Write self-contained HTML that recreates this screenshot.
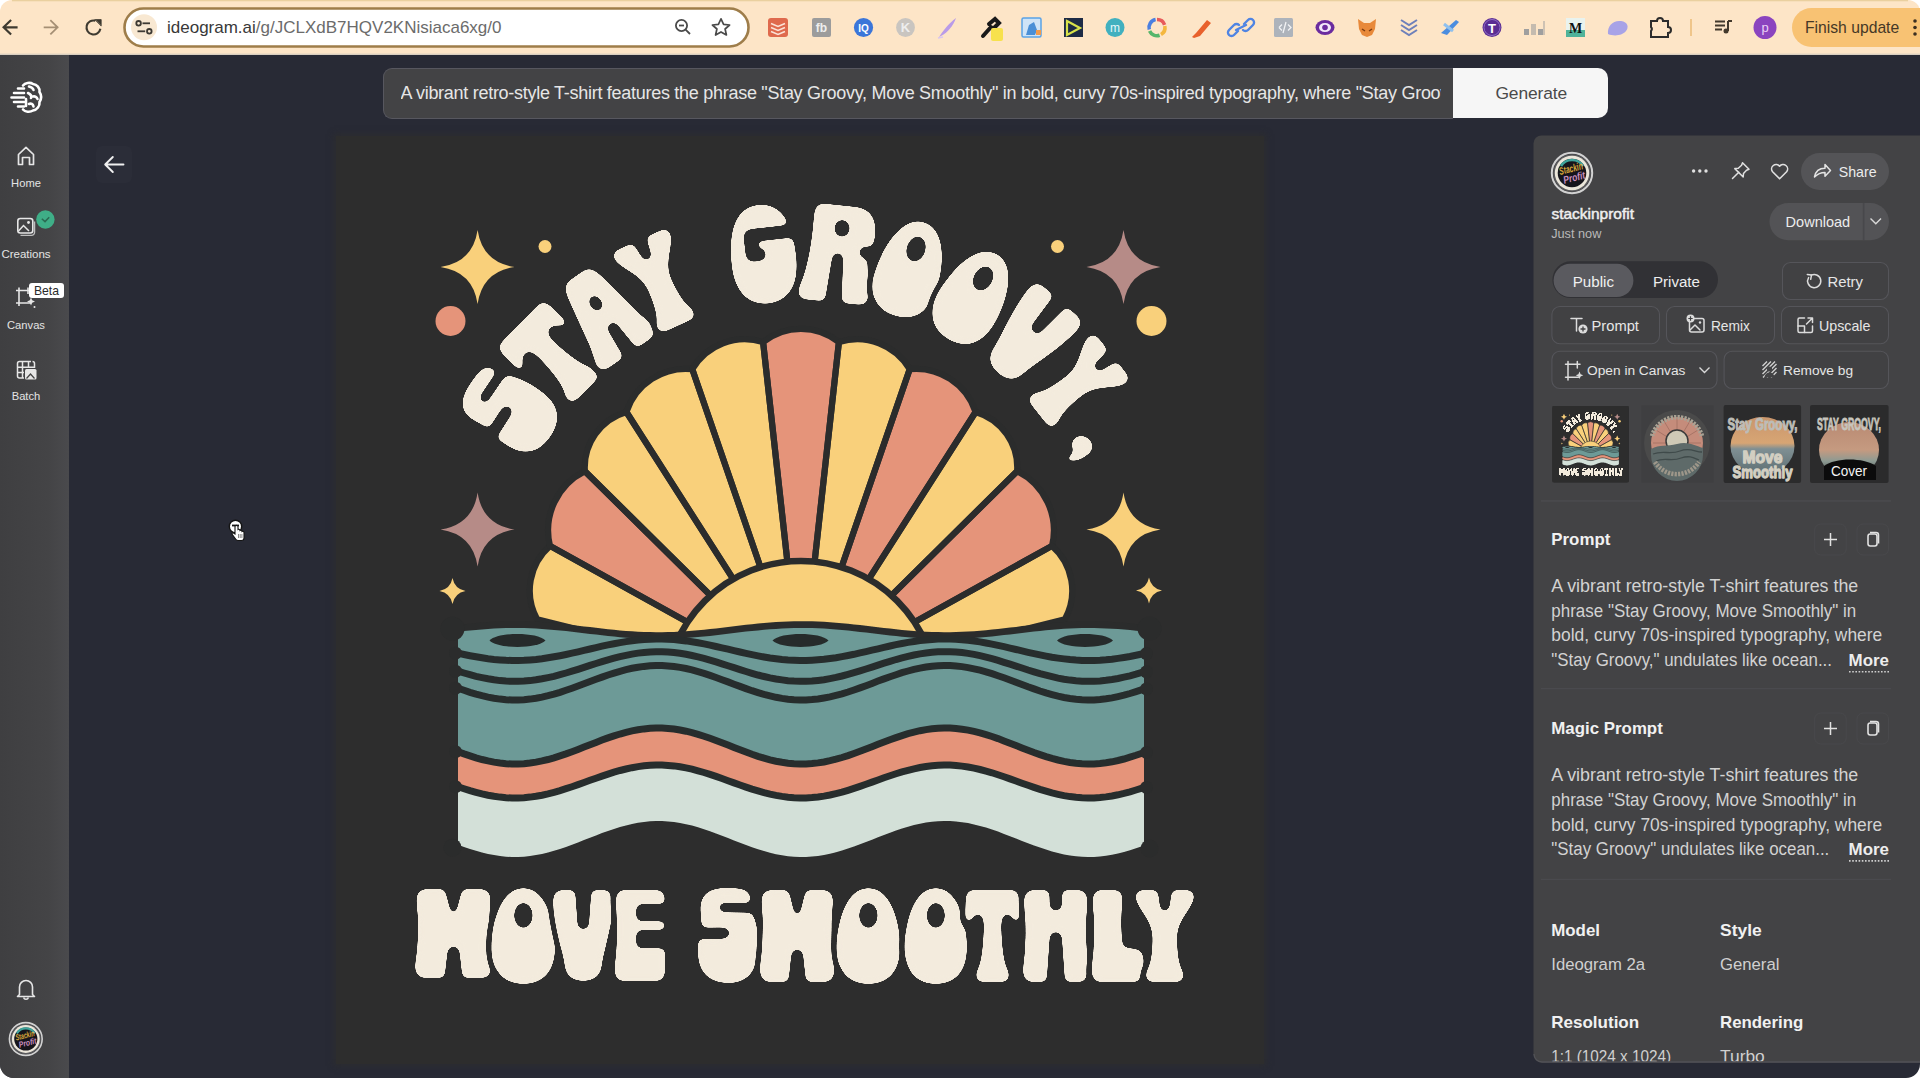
<!DOCTYPE html>
<html><head><meta charset="utf-8">
<style>
*{box-sizing:border-box;margin:0;padding:0}
html,body{width:1920px;height:1080px;overflow:hidden;background:#ffffff}
body{position:relative;font-family:"Liberation Sans",sans-serif}
.abs{position:absolute}
#chrome{left:0;top:0;width:1920px;height:55px;background:#fde5c7;border-top-left-radius:12px;border-top-right-radius:12px}
#page{left:0;top:55px;width:1920px;height:1023px;background:#282a35;border-bottom-left-radius:14px;border-bottom-right-radius:14px;overflow:hidden}
#sidebar{left:0;top:0;width:69px;height:1023px;background:linear-gradient(90deg,#3f3f41 0%,#444446 70%,#4a4a4d 100%)}
.navlbl{position:absolute;width:69px;left:0;text-align:center;color:#e2e2e2;font-size:12px;letter-spacing:-0.2px}
#prompt{left:383px;top:13px;width:1070px;height:51px;background:#434345;border:1px solid #57575f;border-radius:9px 0 0 9px;border-right:none}
#prompttxt{left:16.5px;top:14px;width:1040px;white-space:nowrap;overflow:hidden;color:#e6e6e6;font-size:18px;letter-spacing:-0.28px}
#gen{left:1452.5px;top:13px;width:155.5px;height:50px;background:#f6f6f6;border-radius:0 10px 10px 0;color:#4a4a4a;font-size:17.4px;text-align:center;line-height:51px;letter-spacing:-0.1px;padding-left:2px}
#panel{left:1533px;top:80px;width:400px;height:927px;background:#434345;border-radius:8px;border-bottom:2px solid #4e4e52}
.t{position:absolute;white-space:nowrap}
</style></head>
<body>
<div id="chrome" class="abs">
  <svg class="abs" style="left:0;top:0" width="1920" height="55">
    <rect x="12" y="0" width="1896" height="1.3" fill="#ead09f"/><rect x="0" y="53.6" width="1920" height="1.4" fill="#d9cfc0"/>
    <!-- nav -->
    <g fill="none" stroke-linecap="square" stroke-width="2.2">
      <path d="M16.5 27.3H4.2M10.3 20.8L3.6 27.3L10.3 33.8" stroke="#3e3a30"/>
      <path d="M44.6 27.3H57.4M51 20.8L57.6 27.3L51 33.8" stroke="#a58f74" stroke-width="1.8"/>
      <path d="M100.4 28.8A7 7 0 1 1 95.3 20.7" stroke="#3e3a30" stroke-linecap="butt" stroke-width="2.1"/>
      <path d="M95.2 19.6H101.2V25.6Z" fill="#3e3a30" stroke="#3e3a30" stroke-width=".8" stroke-linejoin="miter"/>
    </g>
    <!-- address bar -->
    <rect x="124.5" y="8.5" width="624" height="38" rx="19" fill="#ffffff" stroke="#9e7d4a" stroke-width="2.6"/>
    <circle cx="144" cy="27.3" r="13" fill="#f8e8d2"/>
    <g stroke="#3d3a34" stroke-width="1.8" fill="none">
      <circle cx="138.6" cy="23.3" r="2.3"/><path d="M142.5 23.3H150"/>
      <circle cx="149.3" cy="31.3" r="2.3"/><path d="M137.5 31.3H145.2"/>
    </g>
    <g stroke="#4a4a4a" stroke-width="1.8" fill="none">
      <circle cx="681.5" cy="25.5" r="5.6"/><path d="M685.6 29.6L690 34"/><path d="M679 25.5H684"/>
    </g>
    <path d="M721 18.8L723.6 24.4L729.6 25L725.1 29L726.4 35L721 31.9L715.6 35L716.9 29L712.4 25L718.4 24.4Z" fill="none" stroke="#4a4a4a" stroke-width="1.7" stroke-linejoin="round"/>
  </svg>
  <div class="t" style="left:167px;top:18px;font-size:17px;color:#6b6b6b;letter-spacing:0px"><span style="color:#383838">ideogram.ai</span>/g/JCLXdB7HQV2KNisiaca6xg/0</div>
  <svg class="abs" style="left:760px;top:0" width="1160" height="55" font-family="Liberation Sans">
    <!-- 778 todoist -->
    <rect x="8" y="18" width="20" height="19" rx="3" fill="#df6a4d"/>
    <path d="M11 23.5l7 3 7-3M11 27.5l7 3 7-3M11 31.5l7 3 7-3" stroke="#fbe3d8" stroke-width="1.6" fill="none"/>
    <!-- 821 fb -->
    <rect x="52" y="18" width="19" height="19" rx="2" fill="#9c9c9c"/>
    <text x="61.5" y="32" font-size="12" font-weight="700" fill="#eee" text-anchor="middle">fb</text>
    <!-- 863 -->
    <circle cx="103.5" cy="27.5" r="9.6" fill="#3b76d9"/>
    <text x="103.5" y="31.5" font-size="10" font-weight="700" fill="#fff" text-anchor="middle">IQ</text>
    <!-- 905 K -->
    <circle cx="145.5" cy="27.5" r="9.4" fill="#c9c5c0"/>
    <text x="145.5" y="32.2" font-size="13" font-weight="700" fill="#eee" text-anchor="middle">K</text>
    <!-- 947 feather -->
    <path d="M179 37C183 31 188 24 196 18C193 26 188 32 181 36Z" fill="#b99be8"/>
    <path d="M178 38L183 37" stroke="#d9c6f0" stroke-width="1.5"/>
    <!-- 990 dropper -->
    <path d="M223 36L231 27M229 24L235 19L239 23L233 29" stroke="#1a1a1a" stroke-width="4" stroke-linecap="round" fill="none"/>
    <rect x="231" y="28" width="12" height="13" rx="2" fill="#f7e14d"/>
    <!-- 1031 -->
    <rect x="262" y="18" width="19" height="19" rx="1.5" fill="#cfe4f7" stroke="#5aa2e6" stroke-width="1.5"/>
    <path d="M266 35L269 25L274 22L277 30L275 35Z" fill="#4a8fd6"/>
    <rect x="276" y="30" width="5" height="5" fill="#f29b4b"/>
    <!-- 1073 -->
    <rect x="304" y="18" width="19" height="19" fill="#1d2b45"/>
    <path d="M307 21L320 28L307 35Z" fill="none" stroke="#d8e24a" stroke-width="2.2"/>
    <!-- 1115 m -->
    <circle cx="355" cy="27.5" r="9.5" fill="#41b0bf"/>
    <text x="355" y="31.5" font-size="12" fill="#e9f7f9" text-anchor="middle">m</text>
    <!-- 1157 ring -->
    <g fill="none" stroke-width="3.6">
      <path d="M397 19.5A8 8 0 0 1 404.6 24.8" stroke="#e85b5b"/>
      <path d="M404.8 26A8 8 0 0 1 401 34.5" stroke="#f4b73e"/>
      <path d="M399.6 35.2A8 8 0 0 1 389.6 31" stroke="#56b66b"/>
      <path d="M389.3 29.6A8 8 0 0 1 395.6 19.6" stroke="#4a7fe0"/>
    </g>
    <!-- 1199 marker -->
    <path d="M432 37L436 33L447 20L451 23L440 36L434 38Z" fill="#e8612c"/>
    <!-- 1241 link -->
    <g fill="none" stroke="#4f84e3" stroke-width="2.4" stroke-linecap="round">
      <path d="M478 31L474 35A3.5 3.5 0 0 1 469 30L474 25A3.5 3.5 0 0 1 479 25"/>
      <path d="M484 24L488 20A3.5 3.5 0 0 1 493 25L488 30A3.5 3.5 0 0 1 483 30"/>
      <path d="M476 30L486 25"/>
    </g>
    <!-- 1283 code -->
    <rect x="514" y="18" width="19" height="19" rx="1.5" fill="#adb3bb"/>
    <path d="M519 27.5l3-3M519 27.5l3 3M528 24.5l3 3-3 3M526 22l-3 11" stroke="#f1f2f4" stroke-width="1.3" fill="none"/>
    <!-- 1325 eye -->
    <ellipse cx="565" cy="27.5" rx="9.5" ry="7.5" fill="#6b2c9f"/>
    <ellipse cx="565" cy="27.5" rx="6" ry="4.5" fill="#f3e8fa"/>
    <circle cx="565" cy="27.5" r="2.8" fill="#6b2c9f"/>
    <!-- 1367 fox -->
    <path d="M598 19L604 23L610 23L616 19L615 29L612 35L607 37L602 35L599 29Z" fill="#e8893a"/>
    <path d="M602 29L605 31M612 29L609 31" stroke="#7a3b10" stroke-width="1.5"/>
    <!-- 1409 chevrons -->
    <path d="M641 20l8 5 8-5M641 25l8 5 8-5M641 30l8 5 8-5" fill="none" stroke="#6e80ba" stroke-width="2"/>
    <!-- 1450 plane -->
    <path d="M681 33L696 20L699 22L687 35Z" fill="#4b8ddf"/>
    <path d="M684 24L693 31" stroke="#8fc0ee" stroke-width="3"/>
    <!-- 1492 T -->
    <circle cx="732" cy="27.5" r="9.5" fill="#5b2d93"/>
    <circle cx="732" cy="27.5" r="8" fill="none" stroke="#8e6bc4" stroke-width="1"/>
    <text x="732" y="32.5" font-size="13" font-weight="700" fill="#fff" text-anchor="middle">T</text>
    <!-- 1534 bars -->
    <g fill="#9f9f9f"><rect x="764" y="29" width="5" height="6"/><rect x="771" y="24" width="5" height="11" opacity=".6"/><rect x="778" y="29" width="5" height="6"/><rect x="783" y="21" width="2" height="14" opacity=".5"/></g>
    <!-- 1576 M -->
    <rect x="806" y="18" width="19" height="19" fill="#e9f3ef"/>
    <rect x="806" y="30" width="19" height="7" fill="#4fb39a"/>
    <text x="815.5" y="33" font-size="14" font-weight="700" font-family="Liberation Serif" fill="#111" text-anchor="middle">M</text>
    <!-- 1618 blob -->
    <path d="M848 34C847 26 853 20 861 21C868 22 869 27 866 31C863 35 855 37 848 34Z" fill="#a8a3e7"/>
    <!-- 1660 puzzle -->
    <path d="M891 21H897A3 3 0 0 1 903 21H908V27A3 3 0 0 1 908 33V37H891V31A3 3 0 0 0 891 27Z" fill="none" stroke="#2c2c2c" stroke-width="2"/>
    <rect x="930" y="19" width="2" height="17" fill="#efc58a"/>
    <!-- 1722 queue -->
    <path d="M955 21.5H965M955 25.5H965M955 29.5H962" stroke="#43392c" stroke-width="2"/>
    <path d="M968 21V31" stroke="#43392c" stroke-width="2"/><circle cx="966" cy="31" r="2.5" fill="#43392c"/>
    <path d="M968 21H972" stroke="#43392c" stroke-width="2"/>
    <!-- 1765 p -->
    <circle cx="1005" cy="27.5" r="11.5" fill="#8b44bf"/>
    <text x="1005" y="31.5" font-size="13" fill="#ecd2f6" text-anchor="middle">p</text>
    <!-- finish update -->
    <rect x="1032" y="8" width="160" height="39" rx="19.5" fill="#f8c273"/>
    <circle cx="1155" cy="21" r="1.8" fill="#3c2f20"/><circle cx="1155" cy="27.5" r="1.8" fill="#3c2f20"/><circle cx="1155" cy="34" r="1.8" fill="#3c2f20"/>
  </svg>
  <div class="t" style="left:1805px;top:19px;font-size:15.7px;color:#463826">Finish update</div>
</div>
<div id="page" class="abs">
  <div id="sidebar" class="abs"></div>
  <div id="prompt" class="abs"><div id="prompttxt" class="abs">A vibrant retro-style T-shirt features the phrase "Stay Groovy, Move Smoothly" in bold, curvy 70s-inspired typography, where "Stay Groovy," undulates like ocean waves</div></div>
  <div id="gen" class="abs">Generate</div>
  <!--ART--><svg class="abs" style="left:336px;top:81px;box-shadow:0 0 6px 2px rgba(46,46,46,.75)" width="928" height="928" viewBox="0 0 928 928">
<g id="artg"><rect width="928" height="928" fill="#2d2d2d"/>
<path d="M141.6 94Q146.4 126.2 178.6 131Q146.4 135.8 141.6 168Q136.8 135.8 104.6 131Q136.8 126.2 141.6 94Z" fill="#f9d07b"/>
<path d="M787.5 94Q792.3 126.2 824.5 131Q792.3 135.8 787.5 168Q782.7 135.8 750.5 131Q782.7 126.2 787.5 94Z" fill="#b68b87"/>
<path d="M141.6 356.5Q146.4 388.7 178.6 393.5Q146.4 398.3 141.6 430.5Q136.8 398.3 104.6 393.5Q136.8 388.7 141.6 356.5Z" fill="#b68b87"/>
<path d="M787.5 356.5Q792.3 388.7 824.5 393.5Q792.3 398.3 787.5 430.5Q782.7 398.3 750.5 393.5Q782.7 388.7 787.5 356.5Z" fill="#f9d07b"/>
<path d="M116.5 442Q118.6 452.9 129.5 455Q118.6 457.1 116.5 468Q114.4 457.1 103.5 455Q114.4 452.9 116.5 442Z" fill="#f9d07b"/>
<path d="M813 441.5Q815.1 452.4 826 454.5Q815.1 456.6 813 467.5Q810.9 456.6 800 454.5Q810.9 452.4 813 441.5Z" fill="#f9d07b"/>
<circle cx="209" cy="110.5" r="6.5" fill="#f9d07b"/>
<circle cx="721.5" cy="110.5" r="6.5" fill="#f9d07b"/>
<circle cx="114.5" cy="185" r="15" fill="#e5947a"/>
<circle cx="815.5" cy="185" r="15" fill="#f9d07b"/>
<path d="M426.2 539.3L201.1 483.2A59.6 59.6 0 0 1 214 409.9L430 529.6Z" fill="#f9d07b"/>
<path d="M430 529.6L214 409.9A66 66 0 0 1 248.9 335.2L436.6 520.9Z" fill="#e5947a"/>
<path d="M436.6 520.9L248.9 335.2A57.8 57.8 0 0 1 290.4 276L443.4 515.3Z" fill="#f9d07b"/>
<path d="M443.4 515.3L290.4 276A62.8 62.8 0 0 1 356.3 233.2L452 511.2Z" fill="#f9d07b"/>
<path d="M452 511.2L356.3 233.2A60.7 60.7 0 0 1 427.1 206.1L460.6 509.2Z" fill="#f9d07b"/>
<path d="M460.6 509.2L427.1 206.1A60.6 60.6 0 0 1 502.9 206.1L469.4 509.2Z" fill="#e5947a"/>
<path d="M469.4 509.2L502.9 206.1A60.7 60.7 0 0 1 573.7 233.2L478 511.2Z" fill="#f9d07b"/>
<path d="M478 511.2L573.7 233.2A62.8 62.8 0 0 1 639.6 276L486.6 515.3Z" fill="#e5947a"/>
<path d="M486.6 515.3L639.6 276A57.8 57.8 0 0 1 681.1 335.2L493.4 520.9Z" fill="#f9d07b"/>
<path d="M493.4 520.9L681.1 335.2A66 66 0 0 1 716 409.9L500 529.6Z" fill="#e5947a"/>
<path d="M500 529.6L716 409.9A59.6 59.6 0 0 1 728.9 483.2L503.8 539.3Z" fill="#f9d07b"/>
<g fill="none" stroke="#2b2c2c" stroke-width="6.2" stroke-linejoin="round">
<path d="M426.2 539.3L201.1 483.2A59.6 59.6 0 0 1 214 409.9L430 529.6Z"/>
<path d="M430 529.6L214 409.9A66 66 0 0 1 248.9 335.2L436.6 520.9Z"/>
<path d="M436.6 520.9L248.9 335.2A57.8 57.8 0 0 1 290.4 276L443.4 515.3Z"/>
<path d="M443.4 515.3L290.4 276A62.8 62.8 0 0 1 356.3 233.2L452 511.2Z"/>
<path d="M452 511.2L356.3 233.2A60.7 60.7 0 0 1 427.1 206.1L460.6 509.2Z"/>
<path d="M460.6 509.2L427.1 206.1A60.6 60.6 0 0 1 502.9 206.1L469.4 509.2Z"/>
<path d="M469.4 509.2L502.9 206.1A60.7 60.7 0 0 1 573.7 233.2L478 511.2Z"/>
<path d="M478 511.2L573.7 233.2A62.8 62.8 0 0 1 639.6 276L486.6 515.3Z"/>
<path d="M486.6 515.3L639.6 276A57.8 57.8 0 0 1 681.1 335.2L493.4 520.9Z"/>
<path d="M493.4 520.9L681.1 335.2A66 66 0 0 1 716 409.9L500 529.6Z"/>
<path d="M500 529.6L716 409.9A59.6 59.6 0 0 1 728.9 483.2L503.8 539.3Z"/>
</g>
<circle cx="465" cy="561" r="136" fill="#f9d07b" stroke="#2b2c2c" stroke-width="6.5"/>
<path d="M122 489L128 488.3L134 487.7L140 487.1L146 486.6L152 486.1L158 485.8L164 485.5L170 485.3L176 485.2L182 485.2L188 485.3L194 485.5L200 485.8L206 486.1L212 486.6L218 487.1L224 487.7L230 488.3L236 489L242 489.7L248 490.4L254 491.1L260 491.8L266 492.5L272 493.2L278 493.8L284 494.4L290 494.9L296 495.3L302 495.7L308 495.9L314 496.1L320 496.2L326 496.2L332 496.1L338 495.9L344 495.6L350 495.2L356 494.8L362 494.3L368 493.7L374 493.1L380 492.4L386 491.7L392 491L398 490.2L404 489.5L410 488.8L416 488.2L422 487.6L428 487L434 486.5L440 486.1L446 485.7L452 485.5L458 485.3L464 485.2L470 485.2L476 485.3L482 485.5L488 485.8L494 486.2L500 486.7L506 487.2L512 487.8L518 488.4L524 489.1L530 489.8L536 490.5L542 491.2L548 491.9L554 492.6L560 493.3L566 493.9L572 494.4L578 494.9L584 495.4L590 495.7L596 496L602 496.1L608 496.2L614 496.2L620 496.1L626 495.8L632 495.5L638 495.2L644 494.7L650 494.2L656 493.6L662 492.9L668 492.3L674 491.6L680 490.9L686 490.1L692 489.4L698 488.7L704 488.1L710 487.5L716 486.9L722 486.4L728 486L734 485.7L740 485.4L746 485.3L752 485.2L758 485.2L764 485.4L770 485.6L776 485.9L782 486.3L788 486.7L794 487.3L800 487.9L806 488.5L808 488.7L808 709.5L806 710.2L800 712.3L794 714.2L788 716L782 717.5L776 718.8L770 719.8L764 720.5L758 720.9L752 721L746 720.8L740 720.3L734 719.5L728 718.4L722 717L716 715.4L710 713.6L704 711.6L698 709.5L692 707.2L686 704.9L680 702.5L674 700.2L668 697.9L662 695.6L656 693.5L650 691.6L644 689.9L638 688.4L632 687.1L626 686.2L620 685.5L614 685.1L608 685L602 685.2L596 685.8L590 686.6L584 687.7L578 689.1L572 690.7L566 692.6L560 694.6L554 696.7L548 699L542 701.3L536 703.7L530 706L524 708.3L518 710.5L512 712.6L506 714.5L500 716.2L494 717.7L488 719L482 719.9L476 720.6L470 720.9L464 721L458 720.7L452 720.2L446 719.3L440 718.2L434 716.8L428 715.1L422 713.3L416 711.3L410 709.1L404 706.8L398 704.5L392 702.1L386 699.8L380 697.5L374 695.3L368 693.2L362 691.3L356 689.6L350 688.2L344 687L338 686L332 685.4L326 685.1L320 685L314 685.3L308 685.9L302 686.8L296 687.9L290 689.4L284 691L278 692.9L272 694.9L266 697.1L260 699.4L254 701.7L248 704.1L242 706.4L236 708.7L230 710.9L224 712.9L218 714.8L212 716.5L206 717.9L200 719.1L194 720L188 720.7L182 721L176 721L170 720.7L164 720L158 719.1L152 717.9L146 716.5L140 714.8L134 712.9L128 710.9L122 708.7Z" fill="#2b2c2c"/>
<path d="M122 495.8L128 495.1L134 494.5L140 493.9L146 493.4L152 492.9L158 492.6L164 492.3L170 492.1L176 492L182 492L188 492.1L194 492.3L200 492.6L206 492.9L212 493.4L218 493.9L224 494.5L230 495.1L236 495.8L242 496.5L248 497.2L254 497.9L260 498.6L266 499.3L272 500L278 500.6L284 501.2L290 501.7L296 502.1L302 502.5L308 502.7L314 502.9L320 503L326 503L332 502.9L338 502.7L344 502.4L350 502L356 501.6L362 501.1L368 500.5L374 499.9L380 499.2L386 498.5L392 497.8L398 497L404 496.3L410 495.6L416 495L422 494.4L428 493.8L434 493.3L440 492.9L446 492.5L452 492.3L458 492.1L464 492L470 492L476 492.1L482 492.3L488 492.6L494 493L500 493.5L506 494L512 494.6L518 495.2L524 495.9L530 496.6L536 497.3L542 498L548 498.7L554 499.4L560 500.1L566 500.7L572 501.2L578 501.7L584 502.2L590 502.5L596 502.8L602 502.9L608 503L614 503L620 502.9L626 502.6L632 502.3L638 502L644 501.5L650 501L656 500.4L662 499.7L668 499.1L674 498.4L680 497.7L686 496.9L692 496.2L698 495.5L704 494.9L710 494.3L716 493.7L722 493.2L728 492.8L734 492.5L740 492.2L746 492.1L752 492L758 492L764 492.2L770 492.4L776 492.7L782 493.1L788 493.5L794 494.1L800 494.7L806 495.3L808 495.5L808 616.5L806 617.2L800 619.3L794 621.2L788 623L782 624.5L776 625.8L770 626.8L764 627.5L758 627.9L752 628L746 627.8L740 627.3L734 626.5L728 625.4L722 624L716 622.4L710 620.6L704 618.6L698 616.5L692 614.2L686 611.9L680 609.5L674 607.2L668 604.9L662 602.6L656 600.5L650 598.6L644 596.9L638 595.4L632 594.1L626 593.2L620 592.5L614 592.1L608 592L602 592.2L596 592.8L590 593.6L584 594.7L578 596.1L572 597.7L566 599.6L560 601.6L554 603.7L548 606L542 608.3L536 610.7L530 613L524 615.3L518 617.5L512 619.6L506 621.5L500 623.2L494 624.7L488 626L482 626.9L476 627.6L470 627.9L464 628L458 627.7L452 627.2L446 626.3L440 625.2L434 623.8L428 622.1L422 620.3L416 618.3L410 616.1L404 613.8L398 611.5L392 609.1L386 606.8L380 604.5L374 602.3L368 600.2L362 598.3L356 596.6L350 595.2L344 594L338 593L332 592.4L326 592.1L320 592L314 592.3L308 592.9L302 593.8L296 594.9L290 596.4L284 598L278 599.9L272 601.9L266 604.1L260 606.4L254 608.7L248 611.1L242 613.4L236 615.7L230 617.9L224 619.9L218 621.8L212 623.5L206 624.9L200 626.1L194 627L188 627.7L182 628L176 628L170 627.7L164 627L158 626.1L152 624.9L146 623.5L140 621.8L134 619.9L128 617.9L122 615.7Z" fill="#6d9a97"/>
<path d="M122 615.7L128 617.9L134 619.9L140 621.8L146 623.5L152 624.9L158 626.1L164 627L170 627.7L176 628L182 628L188 627.7L194 627L200 626.1L206 624.9L212 623.5L218 621.8L224 619.9L230 617.9L236 615.7L242 613.4L248 611.1L254 608.7L260 606.4L266 604.1L272 601.9L278 599.9L284 598L290 596.4L296 594.9L302 593.8L308 592.9L314 592.3L320 592L326 592.1L332 592.4L338 593L344 594L350 595.2L356 596.6L362 598.3L368 600.2L374 602.3L380 604.5L386 606.8L392 609.1L398 611.5L404 613.8L410 616.1L416 618.3L422 620.3L428 622.1L434 623.8L440 625.2L446 626.3L452 627.2L458 627.7L464 628L470 627.9L476 627.6L482 626.9L488 626L494 624.7L500 623.2L506 621.5L512 619.6L518 617.5L524 615.3L530 613L536 610.7L542 608.3L548 606L554 603.7L560 601.6L566 599.6L572 597.7L578 596.1L584 594.7L590 593.6L596 592.8L602 592.2L608 592L614 592.1L620 592.5L626 593.2L632 594.1L638 595.4L644 596.9L650 598.6L656 600.5L662 602.6L668 604.9L674 607.2L680 609.5L686 611.9L692 614.2L698 616.5L704 618.6L710 620.6L716 622.4L722 624L728 625.4L734 626.5L740 627.3L746 627.8L752 628L758 627.9L764 627.5L770 626.8L776 625.8L782 624.5L788 623L794 621.2L800 619.3L806 617.2L808 616.5L808 651.4L806 652.1L800 654L794 655.8L788 657.4L782 658.8L776 660L770 660.9L764 661.5L758 661.9L752 662L746 661.8L740 661.3L734 660.6L728 659.6L722 658.3L716 656.9L710 655.2L704 653.4L698 651.4L692 649.3L686 647.2L680 645L674 642.9L668 640.8L662 638.8L656 636.8L650 635.1L644 633.5L638 632.1L632 631L626 630.1L620 629.4L614 629.1L608 629L602 629.2L596 629.7L590 630.5L584 631.5L578 632.8L572 634.3L566 635.9L560 637.8L554 639.8L548 641.8L542 644L536 646.1L530 648.3L524 650.4L518 652.4L512 654.3L506 656.1L500 657.6L494 659L488 660.1L482 661L476 661.6L470 661.9L464 662L458 661.7L452 661.2L446 660.4L440 659.4L434 658.1L428 656.6L422 654.9L416 653.1L410 651.1L404 649L398 646.9L392 644.7L386 642.5L380 640.4L374 638.4L368 636.5L362 634.8L356 633.2L350 631.9L344 630.8L338 629.9L332 629.4L326 629L320 629L314 629.3L308 629.8L302 630.6L296 631.7L290 633L284 634.5L278 636.2L272 638.1L266 640.1L260 642.2L254 644.3L248 646.5L242 648.6L236 650.7L230 652.7L224 654.6L218 656.3L212 657.9L206 659.2L200 660.3L194 661.1L188 661.7L182 662L176 662L170 661.7L164 661.1L158 660.3L152 659.2L146 657.9L140 656.3L134 654.6L128 652.7L122 650.7Z" fill="#e5947a"/>
<path d="M122 650.7L128 652.7L134 654.6L140 656.3L146 657.9L152 659.2L158 660.3L164 661.1L170 661.7L176 662L182 662L188 661.7L194 661.1L200 660.3L206 659.2L212 657.9L218 656.3L224 654.6L230 652.7L236 650.7L242 648.6L248 646.5L254 644.3L260 642.2L266 640.1L272 638.1L278 636.2L284 634.5L290 633L296 631.7L302 630.6L308 629.8L314 629.3L320 629L326 629L332 629.4L338 629.9L344 630.8L350 631.9L356 633.2L362 634.8L368 636.5L374 638.4L380 640.4L386 642.5L392 644.7L398 646.9L404 649L410 651.1L416 653.1L422 654.9L428 656.6L434 658.1L440 659.4L446 660.4L452 661.2L458 661.7L464 662L470 661.9L476 661.6L482 661L488 660.1L494 659L500 657.6L506 656.1L512 654.3L518 652.4L524 650.4L530 648.3L536 646.1L542 644L548 641.8L554 639.8L560 637.8L566 635.9L572 634.3L578 632.8L584 631.5L590 630.5L596 629.7L602 629.2L608 629L614 629.1L620 629.4L626 630.1L632 631L638 632.1L644 633.5L650 635.1L656 636.8L662 638.8L668 640.8L674 642.9L680 645L686 647.2L692 649.3L698 651.4L704 653.4L710 655.2L716 656.9L722 658.3L728 659.6L734 660.6L740 661.3L746 661.8L752 662L758 661.9L764 661.5L770 660.9L776 660L782 658.8L788 657.4L794 655.8L800 654L806 652.1L808 651.4L808 709.5L806 710.2L800 712.3L794 714.2L788 716L782 717.5L776 718.8L770 719.8L764 720.5L758 720.9L752 721L746 720.8L740 720.3L734 719.5L728 718.4L722 717L716 715.4L710 713.6L704 711.6L698 709.5L692 707.2L686 704.9L680 702.5L674 700.2L668 697.9L662 695.6L656 693.5L650 691.6L644 689.9L638 688.4L632 687.1L626 686.2L620 685.5L614 685.1L608 685L602 685.2L596 685.8L590 686.6L584 687.7L578 689.1L572 690.7L566 692.6L560 694.6L554 696.7L548 699L542 701.3L536 703.7L530 706L524 708.3L518 710.5L512 712.6L506 714.5L500 716.2L494 717.7L488 719L482 719.9L476 720.6L470 720.9L464 721L458 720.7L452 720.2L446 719.3L440 718.2L434 716.8L428 715.1L422 713.3L416 711.3L410 709.1L404 706.8L398 704.5L392 702.1L386 699.8L380 697.5L374 695.3L368 693.2L362 691.3L356 689.6L350 688.2L344 687L338 686L332 685.4L326 685.1L320 685L314 685.3L308 685.9L302 686.8L296 687.9L290 689.4L284 691L278 692.9L272 694.9L266 697.1L260 699.4L254 701.7L248 704.1L242 706.4L236 708.7L230 710.9L224 712.9L218 714.8L212 716.5L206 717.9L200 719.1L194 720L188 720.7L182 721L176 721L170 720.7L164 720L158 719.1L152 717.9L146 716.5L140 714.8L134 712.9L128 710.9L122 708.7Z" fill="#d3e0d8"/>
<g fill="none" stroke="#272d2d" stroke-width="7" stroke-linecap="round">
<path d="M122 517.2L128 518.5L134 519.7L140 520.8L146 521.8L152 522.7L158 523.4L164 523.9L170 524.3L176 524.5L182 524.5L188 524.3L194 523.9L200 523.4L206 522.7L212 521.8L218 520.8L224 519.7L230 518.5L236 517.2L242 515.8L248 514.4L254 513L260 511.6L266 510.2L272 508.9L278 507.7L284 506.6L290 505.6L296 504.8L302 504.1L308 503.5L314 503.2L320 503L326 503L332 503.2L338 503.6L344 504.2L350 504.9L356 505.8L362 506.8L368 507.9L374 509.1L380 510.5L386 511.8L392 513.2L398 514.6L404 516L410 517.4L416 518.7L422 519.9L428 521L434 522L440 522.8L446 523.5L452 524L458 524.3L464 524.5L470 524.5L476 524.2L482 523.8L488 523.3L494 522.5L500 521.7L506 520.6L512 519.5L518 518.3L524 516.9L530 515.6L536 514.2L542 512.8L548 511.4L554 510L560 508.7L566 507.5L572 506.4L578 505.5L584 504.6L590 504L596 503.5L602 503.1L608 503L614 503.1L620 503.3L626 503.7L632 504.3L638 505L644 505.9L650 507L656 508.1L662 509.4L668 510.7L674 512.1L680 513.5L686 514.9L692 516.3L698 517.6L704 518.9L710 520.1L716 521.2L722 522.1L728 522.9L734 523.6L740 524.1L746 524.4L752 524.5L758 524.4L764 524.2L770 523.8L776 523.2L782 522.4L788 521.5L794 520.5L800 519.3L806 518L808 517.6"/>
<path d="M122 535.2L128 537L134 538.7L140 540.3L146 541.6L152 542.8L158 543.8L164 544.6L170 545.1L176 545.3L182 545.3L188 545.1L194 544.6L200 543.8L206 542.8L212 541.6L218 540.3L224 538.7L230 537L236 535.2L242 533.3L248 531.4L254 529.4L260 527.5L266 525.6L272 523.8L278 522.2L284 520.6L290 519.3L296 518.1L302 517.1L308 516.4L314 515.9L320 515.7L326 515.7L332 516L338 516.5L344 517.3L350 518.3L356 519.5L362 520.9L368 522.4L374 524.1L380 525.9L386 527.8L392 529.8L398 531.7L404 533.6L410 535.5L416 537.3L422 539L428 540.5L434 541.9L440 543L446 543.9L452 544.7L458 545.1L464 545.3L470 545.3L476 545L482 544.4L488 543.7L494 542.6L500 541.4L506 540L512 538.4L518 536.7L524 534.9L530 533L536 531.1L542 529.1L548 527.2L554 525.3L560 523.5L566 521.9L572 520.4L578 519L584 517.9L590 517L596 516.3L602 515.8L608 515.7L614 515.7L620 516L626 516.6L632 517.4L638 518.4L644 519.7L650 521.1L656 522.7L662 524.4L668 526.3L674 528.2L680 530.1L686 532L692 534L698 535.8L704 537.6L710 539.2L716 540.7L722 542.1L728 543.2L734 544.1L740 544.8L746 545.2L752 545.3L758 545.3L764 544.9L770 544.3L776 543.5L782 542.5L788 541.2L794 539.8L800 538.2L806 536.4L808 535.8"/>
<path d="M122 552.2L128 554.3L134 556.3L140 558.1L146 559.7L152 561.1L158 562.2L164 563.1L170 563.7L176 564L182 564L188 563.7L194 563.1L200 562.2L206 561.1L212 559.7L218 558.1L224 556.3L230 554.3L236 552.2L242 550L248 547.8L254 545.5L260 543.3L266 541.1L272 539L278 537.1L284 535.3L290 533.7L296 532.3L302 531.2L308 530.4L314 529.8L320 529.5L326 529.6L332 529.9L338 530.5L344 531.4L350 532.5L356 533.9L362 535.6L368 537.4L374 539.4L380 541.5L386 543.7L392 545.9L398 548.2L404 550.4L410 552.6L416 554.7L422 556.6L428 558.4L434 559.9L440 561.3L446 562.4L452 563.2L458 563.7L464 564L470 563.9L476 563.6L482 563L488 562L494 560.9L500 559.4L506 557.8L512 556L518 554L524 551.9L530 549.7L536 547.4L542 545.1L548 542.9L554 540.7L560 538.7L566 536.7L572 535L578 533.4L584 532.1L590 531L596 530.2L602 529.7L608 529.5L614 529.6L620 530L626 530.6L632 531.6L638 532.8L644 534.2L650 535.8L656 537.7L662 539.7L668 541.8L674 544L680 546.3L686 548.5L692 550.8L698 552.9L704 555L710 556.9L716 558.6L722 560.2L728 561.5L734 562.5L740 563.3L746 563.8L752 564L758 563.9L764 563.5L770 562.8L776 561.9L782 560.6L788 559.2L794 557.5L800 555.6L806 553.6L808 552.9"/>
<path d="M122 615.7L128 617.9L134 619.9L140 621.8L146 623.5L152 624.9L158 626.1L164 627L170 627.7L176 628L182 628L188 627.7L194 627L200 626.1L206 624.9L212 623.5L218 621.8L224 619.9L230 617.9L236 615.7L242 613.4L248 611.1L254 608.7L260 606.4L266 604.1L272 601.9L278 599.9L284 598L290 596.4L296 594.9L302 593.8L308 592.9L314 592.3L320 592L326 592.1L332 592.4L338 593L344 594L350 595.2L356 596.6L362 598.3L368 600.2L374 602.3L380 604.5L386 606.8L392 609.1L398 611.5L404 613.8L410 616.1L416 618.3L422 620.3L428 622.1L434 623.8L440 625.2L446 626.3L452 627.2L458 627.7L464 628L470 627.9L476 627.6L482 626.9L488 626L494 624.7L500 623.2L506 621.5L512 619.6L518 617.5L524 615.3L530 613L536 610.7L542 608.3L548 606L554 603.7L560 601.6L566 599.6L572 597.7L578 596.1L584 594.7L590 593.6L596 592.8L602 592.2L608 592L614 592.1L620 592.5L626 593.2L632 594.1L638 595.4L644 596.9L650 598.6L656 600.5L662 602.6L668 604.9L674 607.2L680 609.5L686 611.9L692 614.2L698 616.5L704 618.6L710 620.6L716 622.4L722 624L728 625.4L734 626.5L740 627.3L746 627.8L752 628L758 627.9L764 627.5L770 626.8L776 625.8L782 624.5L788 623L794 621.2L800 619.3L806 617.2L808 616.5"/>
<path d="M122 650.7L128 652.7L134 654.6L140 656.3L146 657.9L152 659.2L158 660.3L164 661.1L170 661.7L176 662L182 662L188 661.7L194 661.1L200 660.3L206 659.2L212 657.9L218 656.3L224 654.6L230 652.7L236 650.7L242 648.6L248 646.5L254 644.3L260 642.2L266 640.1L272 638.1L278 636.2L284 634.5L290 633L296 631.7L302 630.6L308 629.8L314 629.3L320 629L326 629L332 629.4L338 629.9L344 630.8L350 631.9L356 633.2L362 634.8L368 636.5L374 638.4L380 640.4L386 642.5L392 644.7L398 646.9L404 649L410 651.1L416 653.1L422 654.9L428 656.6L434 658.1L440 659.4L446 660.4L452 661.2L458 661.7L464 662L470 661.9L476 661.6L482 661L488 660.1L494 659L500 657.6L506 656.1L512 654.3L518 652.4L524 650.4L530 648.3L536 646.1L542 644L548 641.8L554 639.8L560 637.8L566 635.9L572 634.3L578 632.8L584 631.5L590 630.5L596 629.7L602 629.2L608 629L614 629.1L620 629.4L626 630.1L632 631L638 632.1L644 633.5L650 635.1L656 636.8L662 638.8L668 640.8L674 642.9L680 645L686 647.2L692 649.3L698 651.4L704 653.4L710 655.2L716 656.9L722 658.3L728 659.6L734 660.6L740 661.3L746 661.8L752 662L758 661.9L764 661.5L770 660.9L776 660L782 658.8L788 657.4L794 655.8L800 654L806 652.1L808 651.4"/>
</g>
<circle cx="119.5" cy="517.2" r="6.5" fill="#2b2c2c"/>
<circle cx="119.5" cy="535.2" r="6.5" fill="#2b2c2c"/>
<circle cx="119.5" cy="552.2" r="6.5" fill="#2b2c2c"/>
<circle cx="119.5" cy="615.7" r="6.5" fill="#2b2c2c"/>
<circle cx="119.5" cy="650.7" r="6.5" fill="#2b2c2c"/>
<circle cx="116.5" cy="492.8" r="12" fill="#2b2c2c"/>
<circle cx="116.5" cy="711.7" r="9" fill="#2b2c2c"/>
<circle cx="810.5" cy="517.6" r="6.5" fill="#2b2c2c"/>
<circle cx="810.5" cy="535.8" r="6.5" fill="#2b2c2c"/>
<circle cx="810.5" cy="552.9" r="6.5" fill="#2b2c2c"/>
<circle cx="810.5" cy="616.5" r="6.5" fill="#2b2c2c"/>
<circle cx="810.5" cy="651.4" r="6.5" fill="#2b2c2c"/>
<circle cx="813.5" cy="492.5" r="12" fill="#2b2c2c"/>
<circle cx="813.5" cy="712.5" r="9" fill="#2b2c2c"/>
<path d="M153.5 504.5C161.5 495.9 201.5 495.9 209.5 504.5C201.5 513.1 161.5 513.1 153.5 504.5Z" fill="#262b2b"/>
<path d="M436.5 504.5C444.5 495.9 484.5 495.9 492.5 504.5C484.5 513.1 444.5 513.1 436.5 504.5Z" fill="#262b2b"/>
<path d="M721 504.5C729 495.9 769 495.9 777 504.5C769 513.1 729 513.1 721 504.5Z" fill="#262b2b"/>
<defs><filter id="goo" filterUnits="userSpaceOnUse" x="0" y="0" width="928" height="928" color-interpolation-filters="sRGB"><feGaussianBlur in="SourceGraphic" stdDeviation="3.3"/><feColorMatrix values="1 0 0 0 0 0 1 0 0 0 0 0 1 0 0 0 0 0 24 -11.5"/></filter><mask id="lmask" maskUnits="userSpaceOnUse" x="0" y="0" width="928" height="928"><rect width="928" height="928" fill="#000"/><g transform="translate(117.5 797.5) rotate(0.0) translate(-38.5 -45.5)"><path d="M10.8 0.9L66.2 0.9Q76.2 0.9 75.5 12.7Q71.6 45.5 77.0 78.3Q77.0 90.1 67.8 90.1L9.2 90.1Q0.0 90.1 0.0 78.3Q5.4 45.5 1.5 12.7Q0.8 0.9 10.8 0.9Z" fill="#000" stroke="#000" stroke-width="12" stroke-linejoin="round"/><path d="M10.8 0.9L66.2 0.9Q76.2 0.9 75.5 12.7Q71.6 45.5 77.0 78.3Q77.0 90.1 67.8 90.1L9.2 90.1Q0.0 90.1 0.0 78.3Q5.4 45.5 1.5 12.7Q0.8 0.9 10.8 0.9Z" fill="#fff"/><path d="M27.7 -18.2L49.3 -18.2L38.5 22.8Z" fill="#000" stroke="#000" stroke-width="6" stroke-linejoin="round"/><path d="M36.2 61.9L40.8 61.9L46.2 109.2L30.8 109.2Z" fill="#000" stroke="#000" stroke-width="7" stroke-linejoin="round"/></g><g transform="translate(187.4 800.0) rotate(0.0) translate(-31.7 -48.0)"><path d="M31.7 0.0C54.4 0.0 63.3 34.6 63.3 59.5C63.3 84.5 50.6 96.0 31.7 96.0C12.7 96.0 0.0 84.5 0.0 59.5C0.0 34.6 8.9 0.0 31.7 0.0Z" fill="#000" stroke="#000" stroke-width="12" stroke-linejoin="round"/><path d="M31.7 0.0C54.4 0.0 63.3 34.6 63.3 59.5C63.3 84.5 50.6 96.0 31.7 96.0C12.7 96.0 0.0 84.5 0.0 59.5C0.0 34.6 8.9 0.0 31.7 0.0Z" fill="#fff"/><ellipse cx="31.7" cy="27.4" rx="9.5" ry="13.0" fill="#000"/></g><g transform="translate(247.2 799.0) rotate(0.0) translate(-30.2 -46.0)"><path d="M7.9 0.9L52.6 0.9Q60.5 0.9 60.5 12.0C58.7 41.4 49.6 64.4 48.4 79.1Q46.0 92.0 30.2 92.0Q14.5 92.0 12.1 79.1C10.9 64.4 1.8 41.4 0.0 12.0Q0.0 0.9 7.9 0.9Z" fill="#000" stroke="#000" stroke-width="12" stroke-linejoin="round"/><path d="M7.9 0.9L52.6 0.9Q60.5 0.9 60.5 12.0C58.7 41.4 49.6 64.4 48.4 79.1Q46.0 92.0 30.2 92.0Q14.5 92.0 12.1 79.1C10.9 64.4 1.8 41.4 0.0 12.0Q0.0 0.9 7.9 0.9Z" fill="#fff"/><path d="M24.2 -18.4L36.3 -18.4L32.4 36.8L28.1 36.8Z" fill="#000" stroke="#000" stroke-width="7" stroke-linejoin="round"/></g><g transform="translate(304.7 799.5) rotate(0.0) translate(-26.1 -46.5)"><path d="M7.3 0.9L43.8 0.9Q50.5 0.9 50.5 12.1L50.5 80.9Q50.5 92.1 43.8 92.1L6.8 92.1Q0.0 92.1 0.0 80.0Q4.2 46.5 1.6 13.0Q1.0 0.9 7.3 0.9Z" fill="#000" stroke="#000" stroke-width="12" stroke-linejoin="round"/><path d="M7.3 0.9L43.8 0.9Q50.5 0.9 50.5 12.1L50.5 80.9Q50.5 92.1 43.8 92.1L6.8 92.1Q0.0 92.1 0.0 80.0Q4.2 46.5 1.6 13.0Q1.0 0.9 7.3 0.9Z" fill="#fff"/><path d="M25.0 18.6L72.9 18.6L72.9 28.8L25.0 28.8Z" fill="#000" stroke="#000" stroke-width="7" stroke-linejoin="round"/><path d="M25.0 44.6L72.9 44.6L72.9 55.8L25.0 55.8Z" fill="#000" stroke="#000" stroke-width="7" stroke-linejoin="round"/></g><g transform="translate(392.0 799.5) rotate(0.0) translate(-30.0 -47.5)"><path d="M27.0 0.0C48.0 0.0 52.8 1.9 52.8 13.3L52.8 22.8Q60.0 33.2 60.0 58.9C60.0 85.5 48.0 95.0 30.0 95.0C12.0 95.0 0.0 85.5 0.0 64.6L0.0 47.5L3.6 38.0L2.4 20.9C2.4 5.7 12.0 0.0 27.0 0.0Z" fill="#000" stroke="#000" stroke-width="12" stroke-linejoin="round"/><path d="M27.0 0.0C48.0 0.0 52.8 1.9 52.8 13.3L52.8 22.8Q60.0 33.2 60.0 58.9C60.0 85.5 48.0 95.0 30.0 95.0C12.0 95.0 0.0 85.5 0.0 64.6L0.0 47.5L3.6 38.0L2.4 20.9C2.4 5.7 12.0 0.0 27.0 0.0Z" fill="#fff"/><path d="M84.0 20.4L25.2 19.5" fill="none" stroke="#000" stroke-width="9.5" stroke-linecap="round" stroke-linejoin="round"/><path d="M-30.0 45.6L26.4 45.1" fill="none" stroke="#000" stroke-width="11.4" stroke-linecap="round" stroke-linejoin="round"/></g><g transform="translate(461.2 800.0) rotate(0.0) translate(-37.2 -47.0)"><path d="M10.4 0.9L64.0 0.9Q73.7 0.9 72.9 13.2Q69.2 47.0 74.4 80.8Q74.4 93.1 65.5 93.1L8.9 93.1Q0.0 93.1 0.0 80.8Q5.2 47.0 1.5 13.2Q0.7 0.9 10.4 0.9Z" fill="#000" stroke="#000" stroke-width="12" stroke-linejoin="round"/><path d="M10.4 0.9L64.0 0.9Q73.7 0.9 72.9 13.2Q69.2 47.0 74.4 80.8Q74.4 93.1 65.5 93.1L8.9 93.1Q0.0 93.1 0.0 80.8Q5.2 47.0 1.5 13.2Q0.7 0.9 10.4 0.9Z" fill="#fff"/><path d="M26.8 -18.8L47.6 -18.8L37.2 23.5Z" fill="#000" stroke="#000" stroke-width="6" stroke-linejoin="round"/><path d="M35.0 63.9L39.4 63.9L44.6 112.8L29.8 112.8Z" fill="#000" stroke="#000" stroke-width="7" stroke-linejoin="round"/></g><g transform="translate(532.4 800.0) rotate(0.0) translate(-31.6 -48.0)"><path d="M31.6 0.0C54.4 0.0 63.3 34.6 63.3 59.5C63.3 84.5 50.6 96.0 31.6 96.0C12.7 96.0 0.0 84.5 0.0 59.5C0.0 34.6 8.9 0.0 31.6 0.0Z" fill="#000" stroke="#000" stroke-width="12" stroke-linejoin="round"/><path d="M31.6 0.0C54.4 0.0 63.3 34.6 63.3 59.5C63.3 84.5 50.6 96.0 31.6 96.0C12.7 96.0 0.0 84.5 0.0 59.5C0.0 34.6 8.9 0.0 31.6 0.0Z" fill="#fff"/><ellipse cx="31.6" cy="27.4" rx="9.5" ry="13.0" fill="#000"/></g><g transform="translate(599.8 800.0) rotate(0.0) translate(-31.0 -48.0)"><path d="M31.0 0.0C53.4 0.0 62.1 34.6 62.1 59.5C62.1 84.5 49.7 96.0 31.0 96.0C12.4 96.0 0.0 84.5 0.0 59.5C0.0 34.6 8.7 0.0 31.0 0.0Z" fill="#000" stroke="#000" stroke-width="12" stroke-linejoin="round"/><path d="M31.0 0.0C53.4 0.0 62.1 34.6 62.1 59.5C62.1 84.5 49.7 96.0 31.0 96.0C12.4 96.0 0.0 84.5 0.0 59.5C0.0 34.6 8.7 0.0 31.0 0.0Z" fill="#fff"/><ellipse cx="31.0" cy="27.4" rx="9.3" ry="13.0" fill="#000"/></g><g transform="translate(656.5 800.0) rotate(0.0) translate(-26.9 -47.0)"><path d="M5.4 0.9L48.5 0.9Q53.9 0.9 53.9 12.2L53.9 28.2Q53.9 34.8 49.6 33.8Q46.4 24.4 39.9 24.4Q35.6 25.4 35.6 37.6Q36.7 75.2 43.1 82.7Q45.3 93.1 37.7 93.1L16.2 93.1Q8.6 93.1 10.8 82.7Q17.2 75.2 18.3 37.6Q18.3 25.4 14.0 24.4Q7.5 24.4 4.3 33.8Q0.0 34.8 0.0 28.2L0.0 12.2Q0.0 0.9 5.4 0.9Z" fill="#000" stroke="#000" stroke-width="12" stroke-linejoin="round"/><path d="M5.4 0.9L48.5 0.9Q53.9 0.9 53.9 12.2L53.9 28.2Q53.9 34.8 49.6 33.8Q46.4 24.4 39.9 24.4Q35.6 25.4 35.6 37.6Q36.7 75.2 43.1 82.7Q45.3 93.1 37.7 93.1L16.2 93.1Q8.6 93.1 10.8 82.7Q17.2 75.2 18.3 37.6Q18.3 25.4 14.0 24.4Q7.5 24.4 4.3 33.8Q0.0 34.8 0.0 28.2L0.0 12.2Q0.0 0.9 5.4 0.9Z" fill="#fff"/></g><g transform="translate(719.8 800.0) rotate(0.0) translate(-32.8 -47.0)"><path d="M9.2 0.9L56.4 0.9Q64.9 0.9 64.3 13.2Q61.0 47.0 65.6 80.8Q65.6 93.1 57.7 93.1L7.9 93.1Q0.0 93.1 0.0 80.8Q4.6 47.0 1.3 13.2Q0.7 0.9 9.2 0.9Z" fill="#000" stroke="#000" stroke-width="12" stroke-linejoin="round"/><path d="M9.2 0.9L56.4 0.9Q64.9 0.9 64.3 13.2Q61.0 47.0 65.6 80.8Q65.6 93.1 57.7 93.1L7.9 93.1Q0.0 93.1 0.0 80.8Q4.6 47.0 1.3 13.2Q0.7 0.9 9.2 0.9Z" fill="#fff"/><path d="M29.5 -18.8L36.1 -18.8L35.4 17.9L30.2 17.9Z" fill="#000" stroke="#000" stroke-width="7" stroke-linejoin="round"/><path d="M30.8 47.0L34.8 47.0L39.4 112.8L26.2 112.8Z" fill="#000" stroke="#000" stroke-width="8" stroke-linejoin="round"/></g><g transform="translate(781.8 800.0) rotate(0.0) translate(-25.9 -47.0)"><path d="M7.2 0.9L24.8 0.9Q31.0 0.9 30.5 11.3Q27.9 37.6 31.0 58.3L45.5 60.2Q51.7 61.1 51.7 71.4L51.7 81.8Q51.7 93.1 45.5 93.1L6.2 93.1Q0.0 93.1 0.0 80.8Q4.1 47.0 1.0 13.2Q0.5 0.9 7.2 0.9Z" fill="#000" stroke="#000" stroke-width="12" stroke-linejoin="round"/><path d="M7.2 0.9L24.8 0.9Q31.0 0.9 30.5 11.3Q27.9 37.6 31.0 58.3L45.5 60.2Q51.7 61.1 51.7 71.4L51.7 81.8Q51.7 93.1 45.5 93.1L6.2 93.1Q0.0 93.1 0.0 80.8Q4.1 47.0 1.0 13.2Q0.5 0.9 7.2 0.9Z" fill="#fff"/></g><g transform="translate(828.8 800.0) rotate(0.0) translate(-30.5 -47.0)"><path d="M7.3 0.9L53.7 0.9Q61.0 0.9 59.8 9.4C54.9 23.5 43.9 30.1 42.7 47.0Q42.7 75.2 48.8 82.7Q51.2 93.1 43.9 93.1L17.1 93.1Q9.8 93.1 12.2 82.7Q18.3 75.2 18.3 47.0C17.1 30.1 6.1 23.5 1.2 9.4Q0.0 0.9 7.3 0.9Z" fill="#000" stroke="#000" stroke-width="12" stroke-linejoin="round"/><path d="M7.3 0.9L53.7 0.9Q61.0 0.9 59.8 9.4C54.9 23.5 43.9 30.1 42.7 47.0Q42.7 75.2 48.8 82.7Q51.2 93.1 43.9 93.1L17.1 93.1Q9.8 93.1 12.2 82.7Q18.3 75.2 18.3 47.0C17.1 30.1 6.1 23.5 1.2 9.4Q0.0 0.9 7.3 0.9Z" fill="#fff"/><path d="M24.4 -18.8L36.6 -18.8L31.7 18.8L29.3 18.8Z" fill="#000" stroke="#000" stroke-width="7" stroke-linejoin="round"/></g><g transform="translate(174.8 273.4) rotate(-56.8) translate(-32.0 -48.0)"><path d="M28.8 0.0C51.2 0.0 56.3 1.9 56.3 13.4L56.3 23.0Q64.0 33.6 64.0 59.5C64.0 86.4 51.2 96.0 32.0 96.0C12.8 96.0 0.0 86.4 0.0 65.3L0.0 48.0L3.8 38.4L2.6 21.1C2.6 5.8 12.8 0.0 28.8 0.0Z" fill="#000" stroke="#000" stroke-width="12" stroke-linejoin="round"/><path d="M28.8 0.0C51.2 0.0 56.3 1.9 56.3 13.4L56.3 23.0Q64.0 33.6 64.0 59.5C64.0 86.4 51.2 96.0 32.0 96.0C12.8 96.0 0.0 86.4 0.0 65.3L0.0 48.0L3.8 38.4L2.6 21.1C2.6 5.8 12.8 0.0 28.8 0.0Z" fill="#fff"/><path d="M89.6 20.6L26.9 19.7" fill="none" stroke="#000" stroke-width="9.6" stroke-linecap="round" stroke-linejoin="round"/><path d="M-32.0 46.1L28.2 45.6" fill="none" stroke="#000" stroke-width="11.5" stroke-linecap="round" stroke-linejoin="round"/></g><g transform="translate(217.4 220.5) rotate(-45.6) translate(-34.0 -48.0)"><path d="M6.8 1.0L61.2 1.0Q68.0 1.0 68.0 12.5L68.0 28.8Q68.0 35.5 62.6 34.6Q58.5 25.0 50.3 25.0Q44.9 25.9 44.9 38.4Q46.2 76.8 54.4 84.5Q57.1 95.0 47.6 95.0L20.4 95.0Q10.9 95.0 13.6 84.5Q21.8 76.8 23.1 38.4Q23.1 25.9 17.7 25.0Q9.5 25.0 5.4 34.6Q0.0 35.5 0.0 28.8L0.0 12.5Q0.0 1.0 6.8 1.0Z" fill="#000" stroke="#000" stroke-width="12" stroke-linejoin="round"/><path d="M6.8 1.0L61.2 1.0Q68.0 1.0 68.0 12.5L68.0 28.8Q68.0 35.5 62.6 34.6Q58.5 25.0 50.3 25.0Q44.9 25.9 44.9 38.4Q46.2 76.8 54.4 84.5Q57.1 95.0 47.6 95.0L20.4 95.0Q10.9 95.0 13.6 84.5Q21.8 76.8 23.1 38.4Q23.1 25.9 17.7 25.0Q9.5 25.0 5.4 34.6Q0.0 35.5 0.0 28.8L0.0 12.5Q0.0 1.0 6.8 1.0Z" fill="#fff"/></g><g transform="translate(267.4 178.2) rotate(-34.8) translate(-35.0 -48.0)"><path d="M25.2 1.0L44.8 1.0Q51.8 1.0 54.6 13.4Q60.2 43.2 64.4 67.2Q68.6 81.6 70.0 86.4Q70.0 95.0 61.6 95.0L8.4 95.0Q0.0 95.0 0.0 86.4Q1.4 81.6 5.6 67.2Q9.8 43.2 15.4 13.4Q18.2 1.0 25.2 1.0Z" fill="#000" stroke="#000" stroke-width="12" stroke-linejoin="round"/><path d="M25.2 1.0L44.8 1.0Q51.8 1.0 54.6 13.4Q60.2 43.2 64.4 67.2Q68.6 81.6 70.0 86.4Q70.0 95.0 61.6 95.0L8.4 95.0Q0.0 95.0 0.0 86.4Q1.4 81.6 5.6 67.2Q9.8 43.2 15.4 13.4Q18.2 1.0 25.2 1.0Z" fill="#fff"/><ellipse cx="35.0" cy="34.6" rx="6.3" ry="8.6" fill="#000"/><path d="M33.6 63.4L36.4 63.4L40.6 115.2L29.4 115.2Z" fill="#000" stroke="#000" stroke-width="8" stroke-linejoin="round"/></g><g transform="translate(322.8 146.8) rotate(-24.3) translate(-32.0 -48.0)"><path d="M7.7 1.0L56.3 1.0Q64.0 1.0 62.7 9.6C57.6 24.0 46.1 30.7 44.8 48.0Q44.8 76.8 51.2 84.5Q53.8 95.0 46.1 95.0L17.9 95.0Q10.2 95.0 12.8 84.5Q19.2 76.8 19.2 48.0C17.9 30.7 6.4 24.0 1.3 9.6Q0.0 1.0 7.7 1.0Z" fill="#000" stroke="#000" stroke-width="12" stroke-linejoin="round"/><path d="M7.7 1.0L56.3 1.0Q64.0 1.0 62.7 9.6C57.6 24.0 46.1 30.7 44.8 48.0Q44.8 76.8 51.2 84.5Q53.8 95.0 46.1 95.0L17.9 95.0Q10.2 95.0 12.8 84.5Q19.2 76.8 19.2 48.0C17.9 30.7 6.4 24.0 1.3 9.6Q0.0 1.0 7.7 1.0Z" fill="#fff"/><path d="M25.6 -19.2L38.4 -19.2L33.3 19.2L30.7 19.2Z" fill="#000" stroke="#000" stroke-width="7" stroke-linejoin="round"/></g><g transform="translate(427.2 118.2) rotate(-6.4) translate(-32.5 -49.5)"><path d="M32.5 0.0C55.9 0.0 65.0 19.8 65.0 54.5C65.0 85.1 52.0 99.0 32.5 99.0C13.0 99.0 0.0 85.1 0.0 57.4C0.0 24.8 9.1 0.0 32.5 0.0Z" fill="#000" stroke="#000" stroke-width="12" stroke-linejoin="round"/><path d="M32.5 0.0C55.9 0.0 65.0 19.8 65.0 54.5C65.0 85.1 52.0 99.0 32.5 99.0C13.0 99.0 0.0 85.1 0.0 57.4C0.0 24.8 9.1 0.0 32.5 0.0Z" fill="#fff"/><path d="M91.0 29.7L21.4 29.7L21.4 49.5L29.2 49.5" fill="none" stroke="#000" stroke-width="12.9" stroke-linecap="round" stroke-linejoin="round"/></g><g transform="translate(500.6 117.7) rotate(5.7) translate(-36.5 -49.5)"><path d="M17.5 1.0L51.1 1.0Q73.0 1.0 73.0 27.7Q73.0 39.6 67.2 47.5Q70.1 74.2 73.0 86.1Q74.5 98.0 64.2 98.0L8.8 98.0Q0.0 98.0 2.9 86.1Q11.7 59.4 10.2 11.9Q10.2 1.0 17.5 1.0Z" fill="#000" stroke="#000" stroke-width="12" stroke-linejoin="round"/><path d="M17.5 1.0L51.1 1.0Q73.0 1.0 73.0 27.7Q73.0 39.6 67.2 47.5Q70.1 74.2 73.0 86.1Q74.5 98.0 64.2 98.0L8.8 98.0Q0.0 98.0 2.9 86.1Q11.7 59.4 10.2 11.9Q10.2 1.0 17.5 1.0Z" fill="#fff"/><ellipse cx="39.4" cy="23.8" rx="8.0" ry="8.9" fill="#000"/><path d="M36.5 52.5L39.4 52.5L43.8 118.8L32.1 118.8Z" fill="#000" stroke="#000" stroke-width="8" stroke-linejoin="round"/><path d="M102.2 44.6L64.2 45.5" fill="none" stroke="#000" stroke-width="11.9" stroke-linecap="round" stroke-linejoin="round"/></g><g transform="translate(573.5 133.0) rotate(18.0) translate(-32.0 -49.0)"><path d="M32.0 0.0C55.0 0.0 64.0 35.3 64.0 60.8C64.0 86.2 51.2 98.0 32.0 98.0C12.8 98.0 0.0 86.2 0.0 60.8C0.0 35.3 9.0 0.0 32.0 0.0Z" fill="#000" stroke="#000" stroke-width="12" stroke-linejoin="round"/><path d="M32.0 0.0C55.0 0.0 64.0 35.3 64.0 60.8C64.0 86.2 51.2 98.0 32.0 98.0C12.8 98.0 0.0 86.2 0.0 60.8C0.0 35.3 9.0 0.0 32.0 0.0Z" fill="#fff"/><ellipse cx="32.0" cy="27.9" rx="9.6" ry="13.2" fill="#000"/></g><g transform="translate(636.8 160.8) rotate(29.4) translate(-32.0 -49.0)"><path d="M32.0 0.0C55.0 0.0 64.0 35.3 64.0 60.8C64.0 86.2 51.2 98.0 32.0 98.0C12.8 98.0 0.0 86.2 0.0 60.8C0.0 35.3 9.0 0.0 32.0 0.0Z" fill="#000" stroke="#000" stroke-width="12" stroke-linejoin="round"/><path d="M32.0 0.0C55.0 0.0 64.0 35.3 64.0 60.8C64.0 86.2 51.2 98.0 32.0 98.0C12.8 98.0 0.0 86.2 0.0 60.8C0.0 35.3 9.0 0.0 32.0 0.0Z" fill="#fff"/><ellipse cx="32.0" cy="27.9" rx="9.6" ry="13.2" fill="#000"/></g><g transform="translate(693.4 200.6) rotate(40.8) translate(-32.0 -48.0)"><path d="M8.3 1.0L55.7 1.0Q64.0 1.0 64.0 12.5C62.1 43.2 52.5 67.2 51.2 82.6Q48.6 96.0 32.0 96.0Q15.4 96.0 12.8 82.6C11.5 67.2 1.9 43.2 0.0 12.5Q0.0 1.0 8.3 1.0Z" fill="#000" stroke="#000" stroke-width="12" stroke-linejoin="round"/><path d="M8.3 1.0L55.7 1.0Q64.0 1.0 64.0 12.5C62.1 43.2 52.5 67.2 51.2 82.6Q48.6 96.0 32.0 96.0Q15.4 96.0 12.8 82.6C11.5 67.2 1.9 43.2 0.0 12.5Q0.0 1.0 8.3 1.0Z" fill="#fff"/><path d="M25.6 -19.2L38.4 -19.2L34.2 38.4L29.8 38.4Z" fill="#000" stroke="#000" stroke-width="7" stroke-linejoin="round"/></g><g transform="translate(739.5 248.8) rotate(51.8) translate(-31.0 -48.0)"><path d="M7.4 1.0L54.6 1.0Q62.0 1.0 60.8 9.6C55.8 24.0 44.6 30.7 43.4 48.0Q43.4 76.8 49.6 84.5Q52.1 95.0 44.6 95.0L17.4 95.0Q9.9 95.0 12.4 84.5Q18.6 76.8 18.6 48.0C17.4 30.7 6.2 24.0 1.2 9.6Q0.0 1.0 7.4 1.0Z" fill="#000" stroke="#000" stroke-width="12" stroke-linejoin="round"/><path d="M7.4 1.0L54.6 1.0Q62.0 1.0 60.8 9.6C55.8 24.0 44.6 30.7 43.4 48.0Q43.4 76.8 49.6 84.5Q52.1 95.0 44.6 95.0L17.4 95.0Q9.9 95.0 12.4 84.5Q18.6 76.8 18.6 48.0C17.4 30.7 6.2 24.0 1.2 9.6Q0.0 1.0 7.4 1.0Z" fill="#fff"/><path d="M24.8 -19.2L37.2 -19.2L32.2 19.2L29.8 19.2Z" fill="#000" stroke="#000" stroke-width="7" stroke-linejoin="round"/></g><g transform="translate(743.0 315.0) rotate(30.0) translate(-11.0 -16.0)"><ellipse cx="11.0" cy="9.6" rx="11.0" ry="9.6" fill="#fff"/><path d="M20.9 11.2Q18.7 27.2 1.1 32.0Q8.8 22.4 6.6 14.4Z" fill="#fff"/></g></mask></defs>
<g filter="url(#goo)"><rect width="928" height="928" fill="#f3ebdd" mask="url(#lmask)"/></g>
</g></svg><!--/ART-->
  
</div>
<!--PANEL--><svg class="abs" style="left:1533px;top:135px" width="387" height="928" font-family="Liberation Sans">
<g transform="translate(-1533,-135)">
<rect x="1533.5" y="135.5" width="420" height="927" rx="8" fill="#434345"/>

<g transform="translate(1572 173) scale(1.0)">
<circle r="20.2" fill="none" stroke="#d2d2d2" stroke-width="2"/>
<circle r="18.6" fill="#5b5b5e"/>
<circle r="17.2" fill="#ebe6da"/>
<circle r="14.3" fill="#16151b"/>
<path d="M-11 -7A13 13 0 0 1 11 -7" fill="none" stroke="#3fa39a" stroke-width="2.6"/>
<text x="0" y="-1" font-size="10.5" font-weight="700" font-style="italic" fill="#d9aa3c" text-anchor="middle" transform="rotate(-14)" textLength="24" lengthAdjust="spacingAndGlyphs">Stackin</text>
<text x="1" y="8.5" font-size="10.5" font-weight="700" font-style="italic" fill="#c98fc0" text-anchor="middle" transform="rotate(-14)" textLength="22" lengthAdjust="spacingAndGlyphs">Profit</text>
</g>
<circle cx="1693.6" cy="171" r="1.7" fill="#e0e0e0"/><circle cx="1699.8" cy="171" r="1.7" fill="#e0e0e0"/><circle cx="1706" cy="171" r="1.7" fill="#e0e0e0"/>
<g fill="none" stroke="#e0e0e0" stroke-width="1.5" stroke-linejoin="round" stroke-linecap="round"><path d="M1732.5 178.5L1738.8 172.2"/><path d="M1742.5 162.8L1749 169.3L1746.5 170.2L1743.5 173.5L1743.2 177L1734.8 168.6L1738.3 168.3L1741.6 165.3Z"/></g>
<path d="M1779.6 178.8L1772.6 171.8A4.3 4.3 0 0 1 1779.6 166.2A4.3 4.3 0 0 1 1786.6 171.8Z" fill="none" stroke="#e0e0e0" stroke-width="1.6" stroke-linejoin="round"/>
<rect x="1801" y="153" width="88" height="37" rx="18.5" fill="#545457"/>
<path d="M1814.5 177C1815.5 171.5 1819.5 168.3 1825 168.3V164.5L1830.5 170.5L1825 176.2V172.4C1820.5 172.4 1817.5 173.8 1814.5 177Z" fill="none" stroke="#e4e4e4" stroke-width="1.5" stroke-linejoin="round"/>
<text x="1838.8" y="176.7" font-size="14.2" fill="#ececec" textLength="37.8" lengthAdjust="spacingAndGlyphs">Share</text>
<rect x="1769.5" y="203" width="119.5" height="37.2" rx="18.6" fill="#535356"/>
<rect x="1862.8" y="203" width="1.6" height="37.2" fill="#48484b"/>
<text x="1785.6" y="227" font-size="14.5" fill="#ececec" textLength="64.6" lengthAdjust="spacingAndGlyphs">Download</text>
<path d="M1870.5 218.5L1875.8 223.8L1881 218.5" fill="none" stroke="#d8d8d8" stroke-width="1.4"/>
<text x="1551.4" y="218.8" font-size="14.2" fill="#efefef" stroke="#efefef" stroke-width=".45" textLength="82.6" lengthAdjust="spacingAndGlyphs">stackinprofit</text>
<text x="1551.2" y="237.6" font-size="12.8" fill="#b9b9b9" textLength="50.2" lengthAdjust="spacingAndGlyphs">Just now</text>
<rect x="1552.4" y="261.3" width="165.6" height="36.8" rx="18.4" fill="#313135"/>
<rect x="1553.6" y="263.8" width="79.8" height="33.2" rx="16.6" fill="#5a5a5f"/>
<text x="1572.7" y="286.6" font-size="15.2" fill="#f0f0f0" textLength="41.3" lengthAdjust="spacingAndGlyphs">Public</text>
<text x="1652.9" y="286.6" font-size="15.1" fill="#ededed" textLength="47.1" lengthAdjust="spacingAndGlyphs">Private</text>
<rect x="1782.5" y="262.5" width="106" height="37" rx="8" fill="#414143" stroke="#55555a" stroke-width="1.1"/>
<rect x="1551.9" y="306.5" width="107.59999999999991" height="37.30000000000001" rx="8" fill="#414143" stroke="#55555a" stroke-width="1.1"/>
<rect x="1666.5" y="306.5" width="108" height="37.30000000000001" rx="8" fill="#414143" stroke="#55555a" stroke-width="1.1"/>
<rect x="1781.5" y="306.5" width="107" height="37.30000000000001" rx="8" fill="#414143" stroke="#55555a" stroke-width="1.1"/>
<rect x="1551.9" y="351.2" width="165.0999999999999" height="37.30000000000001" rx="8" fill="#414143" stroke="#55555a" stroke-width="1.1"/>
<rect x="1724.1" y="351.2" width="164.4000000000001" height="37.30000000000001" rx="8" fill="#414143" stroke="#55555a" stroke-width="1.1"/>
<path d="M1808.6 277.6A6.6 6.6 0 1 0 1811.2 275.2" fill="none" stroke="#dcdcdc" stroke-width="1.5" stroke-linecap="round" stroke-linejoin="round"/><path d="M1807.3 274.4L1811.5 275.1L1810.7 279.3" fill="none" stroke="#dcdcdc" stroke-width="1.5" stroke-linecap="round" stroke-linejoin="round"/>
<text x="1827.5" y="286.8" font-size="14.9" fill="#e6e6e6" textLength="35.5" lengthAdjust="spacingAndGlyphs">Retry</text>
<path d="M1571 318.5H1582M1576.5 318.5V331" fill="none" stroke="#dcdcdc" stroke-width="1.5" stroke-linecap="round" stroke-linejoin="round"/><circle cx="1583" cy="329" r="4.6" fill="#dcdcdc"/><path d="M1583 326.5V331.5M1580.5 329H1585.5" stroke="#414143" stroke-width="1.3"/>
<text x="1591.5" y="330.6" font-size="14.7" fill="#e6e6e6" textLength="47.4" lengthAdjust="spacingAndGlyphs">Prompt</text>
<rect x="1689.5" y="318.5" width="14.5" height="13.5" rx="2" fill="none" stroke="#dcdcdc" stroke-width="1.5" stroke-linecap="round" stroke-linejoin="round"/><path d="M1690 330L1695 325L1700 330" fill="none" stroke="#dcdcdc" stroke-width="1.5" stroke-linecap="round" stroke-linejoin="round"/><circle cx="1700" cy="322.5" r="1.2" fill="#dcdcdc"/><circle cx="1690.5" cy="318.5" r="4" fill="#dcdcdc"/><path d="M1690.5 316.3V320.7M1688.3 318.5H1692.7" stroke="#414143" stroke-width="1.2"/>
<text x="1710.9" y="330.6" font-size="13.8" fill="#e6e6e6" textLength="39.1" lengthAdjust="spacingAndGlyphs">Remix</text>
<path d="M1804.5 318H1799.5A1.5 1.5 0 0 0 1798 319.5V331A1.5 1.5 0 0 0 1799.5 332.5H1811A1.5 1.5 0 0 0 1812.5 331V326" fill="none" stroke="#dcdcdc" stroke-width="1.5" stroke-linecap="round" stroke-linejoin="round"/><path d="M1798 326H1804.5V332.5M1806.5 324L1812.5 318M1808 318H1812.5V322.5" fill="none" stroke="#dcdcdc" stroke-width="1.5" stroke-linecap="round" stroke-linejoin="round"/>
<text x="1819" y="330.6" font-size="14.2" fill="#e6e6e6" textLength="51.4" lengthAdjust="spacingAndGlyphs">Upscale</text>
<path d="M1568 361.5V380M1565.5 377.3H1578.5M1565.5 364.3H1580M1577.3 361.5V368" fill="none" stroke="#dcdcdc" stroke-width="1.5" stroke-linecap="round" stroke-linejoin="round"/><path d="M1579.5 371.5L1580.6 374.2L1583.3 375.3L1580.6 376.4L1579.5 379.1L1578.4 376.4L1575.7 375.3L1578.4 374.2Z" fill="#dcdcdc"/>
<text x="1587" y="375.2" font-size="13.7" fill="#e6e6e6" textLength="98.4" lengthAdjust="spacingAndGlyphs">Open in Canvas</text>
<path d="M1699.5 367.5L1704.5 372.5L1709.5 367.5" fill="none" stroke="#d8d8d8" stroke-width="1.4"/>
<g stroke="#d0d0d0" stroke-width="1.4"><path d="M1762.5 366L1767 361.5M1762.5 370L1771 361.5M1762.5 374L1775 361.5M1763 377.5L1776.5 364M1767 377.5L1776.5 368M1771 377.5L1776.5 372"/></g><circle cx="1769.5" cy="369" r="2.6" fill="#434345"/><path d="M1764.5 377.5A5 5 0 0 1 1774.5 377.5" fill="#434345"/>
<text x="1783" y="375.2" font-size="13.7" fill="#e6e6e6" textLength="70" lengthAdjust="spacingAndGlyphs">Remove bg</text>
<rect x="1552.3" y="406" width="76.5" height="76.5" rx="2" fill="#2a2a2a"/>
<svg x="1552.3" y="406" width="76.5" height="76.5" viewBox="0 0 928 928"><use href="#artg"/></svg>
<rect x="1641.5" y="405.5" width="72" height="77" fill="#3f3f41"/>
<circle cx="1677" cy="443" r="33" fill="#4a4a4a"/>
<circle cx="1677" cy="443" r="26" fill="#c58c7b"/>
<g stroke="#a87466" stroke-width="1"><path d="M1653 443H1701M1656 430L1698 456M1664 421L1690 465M1677 417V469M1690 421L1664 465M1698 430L1656 456"/></g>
<circle cx="1677" cy="441" r="11" fill="#cfc9b6" stroke="#3a3a3a" stroke-width="1.5"/>
<path d="M1651 449C1660 444 1667 447 1677 444C1687 441 1694 445 1703 448V455A26 26 0 0 1 1651 455Z" fill="#5e6a69"/>
<path d="M1653 454C1663 450 1670 455 1680 451C1690 447 1695 452 1702 452M1656 461C1664 457 1672 462 1681 458C1690 455 1694 458 1699 460" fill="none" stroke="#3f4a4a" stroke-width="1.3"/>
<path d="M1652 436A26 26 0 0 1 1702 436" fill="none" stroke="#a9a294" stroke-width="4.5" stroke-dasharray="2.2 1.2"/>
<path d="M1655 462A26 26 0 0 0 1699 462" fill="none" stroke="#9e978a" stroke-width="4.5" stroke-dasharray="2.2 1.2"/>
<rect x="1723.6" y="405" width="77.5" height="78" rx="2" fill="#2b2b2c"/>
<defs><linearGradient id="g3" x1="0" y1="0" x2="0" y2="1"><stop offset="0" stop-color="#c9966d"/><stop offset=".45" stop-color="#d7a574"/><stop offset=".55" stop-color="#7f8f93"/><stop offset="1" stop-color="#5d6e72"/></linearGradient><linearGradient id="g4" x1="0" y1="0" x2="0" y2="1"><stop offset="0" stop-color="#b98a73"/><stop offset=".5" stop-color="#c59a80"/><stop offset=".7" stop-color="#8c9a93"/><stop offset="1" stop-color="#3b3b3b"/></linearGradient></defs>
<ellipse cx="1762.5" cy="446" rx="32" ry="29" fill="url(#g3)"/>
<text x="1762.5" y="430" font-size="17" font-weight="700" fill="#bdbdb8" stroke="#bdbdb8" stroke-width="1" text-anchor="middle" textLength="70" lengthAdjust="spacingAndGlyphs">Stay Groovy,</text>
<text x="1762.5" y="463" font-size="17" font-weight="700" fill="#d3cfc2" stroke="#d3cfc2" stroke-width="1.3" stroke-linejoin="round" text-anchor="middle" textLength="40" lengthAdjust="spacingAndGlyphs">Move</text>
<text x="1762.5" y="478" font-size="17" font-weight="700" fill="#d3cfc2" stroke="#d3cfc2" stroke-width="1.3" stroke-linejoin="round" text-anchor="middle" textLength="60" lengthAdjust="spacingAndGlyphs">Smoothly</text>
<rect x="1810" y="405" width="78.6" height="78" rx="2" fill="#2b2b2c"/>
<ellipse cx="1849" cy="450" rx="30" ry="28" fill="url(#g4)"/>
<text x="1849" y="430" font-size="16" font-weight="700" fill="#c7c5bd" stroke="#c7c5bd" stroke-width=".8" text-anchor="middle" textLength="64" lengthAdjust="spacingAndGlyphs">STAY GROOVY,</text>
<path d="M1824 466C1835 458 1862 457 1876 466V480H1824Z" fill="#0b0b0c"/>
<text x="1849" y="476" font-size="14.5" fill="#f4f4f4" text-anchor="middle" textLength="36" lengthAdjust="spacingAndGlyphs">Cover</text>
<rect x="1541" y="500.3" width="350" height="1.3" fill="#4c4c50"/>
<rect x="1541" y="688" width="350" height="1.3" fill="#4a4a4e"/>
<rect x="1541" y="878.8" width="350" height="1.3" fill="#4a4a4e"/>
<text x="1551.3" y="545" font-size="16.9" font-weight="700" fill="#f1f1f1" textLength="59" lengthAdjust="spacingAndGlyphs">Prompt</text>
<rect x="1814.7" y="524.0" width="31.5" height="31" rx="6" fill="none" stroke="#49494c" stroke-width="1"/>
<rect x="1857" y="524.0" width="31.5" height="31" rx="6" fill="none" stroke="#49494c" stroke-width="1"/>
<path d="M1830.5 533.0V546.0M1824 539.5H1837" stroke="#e2e2e2" stroke-width="1.5"/>
<rect x="1868" y="534.0" width="9" height="12" rx="2.2" fill="none" stroke="#e2e2e2" stroke-width="1.6"/>
<path d="M1870 532.5H1876A2.5 2.5 0 0 1 1878.5 535.0V543.5" fill="none" stroke="#e2e2e2" stroke-width="1.6"/>
<text x="1551.3" y="592.0" font-size="17.6" fill="#d2d2d2" textLength="307" lengthAdjust="spacingAndGlyphs">A vibrant retro-style T-shirt features the</text>
<text x="1551.3" y="616.7" font-size="17.6" fill="#d2d2d2" textLength="305" lengthAdjust="spacingAndGlyphs">phrase &quot;Stay Groovy, Move Smoothly&quot; in</text>
<text x="1551.3" y="641.4" font-size="17.6" fill="#d2d2d2" textLength="331" lengthAdjust="spacingAndGlyphs">bold, curvy 70s-inspired typography, where</text>
<text x="1551.3" y="666.1" font-size="17.6" fill="#d2d2d2" textLength="280.7" lengthAdjust="spacingAndGlyphs">&quot;Stay Groovy,&quot; undulates like ocean...</text>
<text x="1848.6" y="666.1" font-size="17" font-weight="700" fill="#ededed" textLength="40.4" lengthAdjust="spacingAndGlyphs">More</text>
<path d="M1849 671.7H1889" stroke="#cfcfcf" stroke-width="1.6" stroke-dasharray="1.6 1.6"/>
<text x="1551.3" y="734" font-size="16.9" font-weight="700" fill="#f1f1f1" textLength="111.5" lengthAdjust="spacingAndGlyphs">Magic Prompt</text>
<rect x="1814.7" y="713.0" width="31.5" height="31" rx="6" fill="none" stroke="#49494c" stroke-width="1"/>
<rect x="1857" y="713.0" width="31.5" height="31" rx="6" fill="none" stroke="#49494c" stroke-width="1"/>
<path d="M1830.5 722.0V735.0M1824 728.5H1837" stroke="#e2e2e2" stroke-width="1.5"/>
<rect x="1868" y="723.0" width="9" height="12" rx="2.2" fill="none" stroke="#e2e2e2" stroke-width="1.6"/>
<path d="M1870 721.5H1876A2.5 2.5 0 0 1 1878.5 724.0V732.5" fill="none" stroke="#e2e2e2" stroke-width="1.6"/>
<text x="1551.3" y="781.2" font-size="17.6" fill="#d2d2d2" textLength="307" lengthAdjust="spacingAndGlyphs">A vibrant retro-style T-shirt features the</text>
<text x="1551.3" y="805.9" font-size="17.6" fill="#d2d2d2" textLength="305" lengthAdjust="spacingAndGlyphs">phrase &quot;Stay Groovy, Move Smoothly&quot; in</text>
<text x="1551.3" y="830.6" font-size="17.6" fill="#d2d2d2" textLength="331" lengthAdjust="spacingAndGlyphs">bold, curvy 70s-inspired typography, where</text>
<text x="1551.3" y="855.3" font-size="17.6" fill="#d2d2d2" textLength="278" lengthAdjust="spacingAndGlyphs">&quot;Stay Groovy&quot; undulates like ocean...</text>
<text x="1848.6" y="855.3" font-size="17" font-weight="700" fill="#ededed" textLength="40.4" lengthAdjust="spacingAndGlyphs">More</text>
<path d="M1849 860.9H1889" stroke="#cfcfcf" stroke-width="1.6" stroke-dasharray="1.6 1.6"/>
<text x="1551.25" y="936.3" font-size="17" font-weight="700" fill="#f1f1f1" textLength="48.75" lengthAdjust="spacingAndGlyphs">Model</text>
<text x="1720" y="936.3" font-size="17" font-weight="700" fill="#f1f1f1" textLength="41.7" lengthAdjust="spacingAndGlyphs">Style</text>
<text x="1551.25" y="970" font-size="16.7" fill="#d0d0d0" textLength="93.75" lengthAdjust="spacingAndGlyphs">Ideogram 2a</text>
<text x="1720" y="970" font-size="16.7" fill="#d0d0d0" textLength="59.4" lengthAdjust="spacingAndGlyphs">General</text>
<text x="1551.25" y="1028.3" font-size="17" font-weight="700" fill="#f1f1f1" textLength="87.9" lengthAdjust="spacingAndGlyphs">Resolution</text>
<text x="1720" y="1028.3" font-size="17" font-weight="700" fill="#f1f1f1" textLength="83.3" lengthAdjust="spacingAndGlyphs">Rendering</text>
<clipPath id="pclip"><rect x="1533" y="1040" width="400" height="21.8"/></clipPath>
<g clip-path="url(#pclip)">
<text x="1551.25" y="1061.6" font-size="16.7" fill="#d0d0d0" textLength="119.8" lengthAdjust="spacingAndGlyphs">1:1 (1024 x 1024)</text>
<text x="1720" y="1061.6" font-size="16.7" fill="#d0d0d0" textLength="44.8" lengthAdjust="spacingAndGlyphs">Turbo</text>
</g>
<path d="M1534 1054A8 8 0 0 0 1542 1062H1930" fill="none" stroke="#525257" stroke-width="1.3"/>
</g></svg><!--/PANEL-->
<svg id="side" class="abs" style="left:0;top:0" width="140" height="1080" font-family="Liberation Sans">
  <!-- logo -->
  <g stroke="#ffffff" stroke-width="2.6" stroke-linecap="round" fill="none">
    <path d="M18 88.5H24M14 93H24M11.5 97.5H24M14 102H24M18 106.5H24"/>
    <path d="M23 85.5C25 83 30 82 33 84C37 84.5 40 88 39.5 92C41.5 95 41.5 99 39.5 102C40 106 37 110 33 110.5C30 112.5 25 112 23 109.5"/>
    <path d="M29 86.5C31 87 33 88 33.5 90M28 93C30 94 32 96 31 98M33 96.5C35 96 37 97 37.5 99M29 104C31 103 33 104 33.5 106.5M26 99V106"/>
  </g>
  <!-- home -->
  <path d="M18.5 164.5V154.5L26 147.3L33.5 154.5V164.5H29.5V157.5H22.5V164.5Z" fill="none" stroke="#e6e6e6" stroke-width="1.7" stroke-linejoin="round"/>
  <text x="26" y="186.5" font-size="11.2" fill="#e4e4e4" text-anchor="middle">Home</text>
  <!-- creations -->
  <rect x="17.8" y="218.5" width="15" height="14.5" rx="2.5" fill="none" stroke="#e6e6e6" stroke-width="1.6"/>
  <path d="M20.5 235.3H31.5A3 3 0 0 0 34.6 232.3V221.5" fill="none" stroke="#bdbdbd" stroke-width="1.3"/>
  <path d="M18.5 231L23.5 225.5L29 231" fill="none" stroke="#e6e6e6" stroke-width="1.5"/>
  <circle cx="28.5" cy="222.5" r="1.4" fill="#e6e6e6"/>
  <circle cx="45.4" cy="219.5" r="9.2" fill="#3fae87"/>
  <path d="M41.8 218.8L45 221.6L49.2 217.2" fill="none" stroke="#2b6a52" stroke-width="1.5"/>
  <text x="26" y="257.5" font-size="11.5" fill="#e4e4e4" text-anchor="middle">Creations</text>
  <!-- canvas -->
  <path d="M19 287.5V306M16 303H31M16 290.5H31M28 287.5V294" fill="none" stroke="#e6e6e6" stroke-width="1.6"/>
  <path d="M31 297.5L32.2 300.3L35 301.5L32.2 302.7L31 305.5L29.8 302.7L27 301.5L29.8 300.3Z" fill="#e6e6e6"/>
  <circle cx="34.5" cy="307" r="1" fill="#e6e6e6"/>
  <rect x="29" y="283" width="35" height="15" rx="3" fill="#ffffff"/>
  <text x="46.5" y="295" font-size="12.2" fill="#2a2a2a" text-anchor="middle">Beta</text>
  <text x="26" y="328.5" font-size="11.2" fill="#e4e4e4" text-anchor="middle">Canvas</text>
  <!-- batch -->
  <g fill="none" stroke="#e6e6e6" stroke-width="1.5">
    <path d="M31 361.5H19.5A2 2 0 0 0 17.5 363.5V376A2 2 0 0 0 19.5 378H24M17.5 367.3H34.5V363.5A2 2 0 0 0 32.5 361.5M17.5 372.5H24M22.5 361.5V378M28.5 361.5V367"/>
  </g>
  <rect x="25" y="369" width="11.5" height="10.5" rx="1.5" fill="#e6e6e6"/>
  <path d="M26.5 378.5L30.5 374L34.5 378.5" fill="none" stroke="#444" stroke-width="1.2"/>
  <text x="26" y="399.5" font-size="11.2" fill="#e4e4e4" text-anchor="middle">Batch</text>
  <!-- bell -->
  <path d="M19.5 994.5V987A6.5 6.5 0 0 1 32.5 987V994.5L34.5 996.5H17.5Z" fill="none" stroke="#e6e6e6" stroke-width="1.6" stroke-linejoin="round"/>
  <path d="M23.6 997.5A2.5 2.5 0 0 0 28.4 997.5" fill="none" stroke="#e6e6e6" stroke-width="1.6"/>
  <!-- avatar -->
  <g transform="translate(25.8 1039) scale(0.81)">
<circle r="20.2" fill="none" stroke="#d2d2d2" stroke-width="2"/>
<circle r="18.6" fill="#5b5b5e"/>
<circle r="17.2" fill="#ebe6da"/>
<circle r="14.3" fill="#16151b"/>
<path d="M-11 -7A13 13 0 0 1 11 -7" fill="none" stroke="#3fa39a" stroke-width="2.6"/>
<text x="0" y="-1" font-size="10.5" font-weight="700" font-style="italic" fill="#d9aa3c" text-anchor="middle" transform="rotate(-14)" textLength="24" lengthAdjust="spacingAndGlyphs">Stackin</text>
<text x="1" y="8.5" font-size="10.5" font-weight="700" font-style="italic" fill="#c98fc0" text-anchor="middle" transform="rotate(-14)" textLength="22" lengthAdjust="spacingAndGlyphs">Profit</text>
</g>
  <!-- back arrow -->
  <rect x="96" y="146" width="36" height="37" rx="6" fill="#2b2d38"/>
  <path d="M123.5 164.5H105.5M112.8 157L105.2 164.5L112.8 172" fill="none" stroke="#f0f0f0" stroke-width="1.9" stroke-linecap="round" stroke-linejoin="round"/>
</svg>
<!-- cursor -->
<svg class="abs" style="left:226px;top:518px" width="24" height="26">
  <circle cx="9.5" cy="8.5" r="6.2" fill="#ffffff" stroke="#141414" stroke-width="1.4"/>
  <path d="M6 7.5H13" stroke="#141414" stroke-width="1.8"/>
  <path d="M9 8V16L7.5 15C6.5 14.5 5.5 15.5 6.3 16.6L10 21.5C10.6 22.3 11.2 22.5 12 22.5H15.5C17 22.5 18 21.5 18 20V14.5C18 13.5 17 13 16 13.5C16 12.5 15 12 14 12.5C14 11.5 13 11 12 11.5V8.5C12 7 9 7 9 8.5Z" fill="#ffffff" stroke="#141414" stroke-width="1.1"/>
  <path d="M12.5 16V20M14.2 16V20M15.9 16V20" stroke="#555" stroke-width=".7"/>
</svg>
</body></html>
